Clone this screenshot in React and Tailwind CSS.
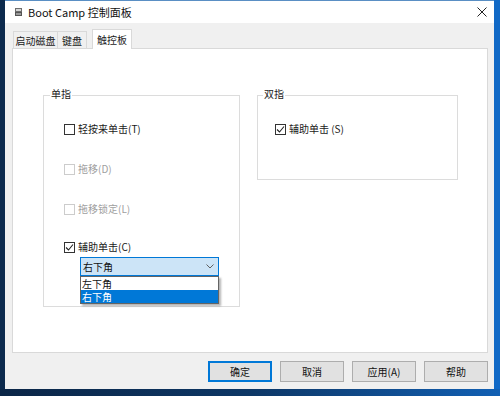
export default function App() {
  const font = "font-['Noto_Sans_CJK_SC','Noto_Sans',sans-serif]";

  const CheckBox = ({ checked, disabled }) => (
    <span
      className={`flex items-center justify-center w-[11px] h-[11px] border bg-white ${
        disabled ? "border-[#cccccc]" : "border-[#333333]"
      }`}
    >
      {checked && (
        <svg width="9" height="9" viewBox="0 0 9 9">
          <polyline points="1,4.5 3.5,7 8,1.5" fill="none" stroke="#222" strokeWidth="1.1" />
        </svg>
      )}
    </span>
  );

  const Option = ({ label, checked, disabled, className = "" }) => (
    <div className={`flex items-center gap-[3px] h-[12px] ${className}`}>
      <CheckBox checked={checked} disabled={disabled} />
      <span className={`leading-none ${disabled ? "text-[#a0a0a0]" : "text-[#1a1a1a]"}`}>{label}</span>
    </div>
  );

  return (
    <div className={`w-[500px] h-[396px] flex flex-col text-[10px] ${font}`}>
      <div className="flex h-[389px]">
        <div className="w-[5px] bg-[#0c2a4d]" />
        <div className="w-[489px] flex flex-col bg-[#f0f0f0] border-t border-[#5a8fc4]">
          {/* title bar */}
          <div className="h-[22px] bg-white flex items-center pl-[10px] pr-[6px]">
            <svg width="7" height="8" viewBox="0 0 7 8" className="mr-[6px]">
              <rect x="0.5" y="0.5" width="6" height="3" fill="#d6d6d6" stroke="#6d6d6d" />
              <rect x="0.5" y="4.5" width="6" height="3" fill="#9a9a9a" stroke="#555" />
            </svg>
            <span className="text-[11px] leading-none text-[#111]">Boot Camp 控制面板</span>
            <div className="flex-1" />
            <svg width="10" height="10" viewBox="0 0 10 10" className="mr-[1px]">
              <path d="M0.5 0.5 L9.5 9.5 M9.5 0.5 L0.5 9.5" stroke="#222" strokeWidth="1" />
            </svg>
          </div>

          <div className="flex-1 flex flex-col pl-[7px] pr-[6px]">
            {/* tabs */}
            <div className="flex items-end pt-[6px] pl-[1px] h-[25px]">
              <div className="w-[45px] h-[17px] border border-b-0 border-[#d9d9d9] flex items-center justify-center text-[#1a1a1a]">
                启动磁盘
              </div>
              <div className="w-[29px] h-[17px] border border-l-0 border-b-0 border-[#d9d9d9] flex items-center justify-center text-[#1a1a1a]">
                键盘
              </div>
              <div className="ml-[5px] w-[40px] h-[20px] -mb-px relative z-10 bg-white border border-b-0 border-[#d9d9d9] flex items-center justify-center text-[#1a1a1a]">
                触控板
              </div>
            </div>

            {/* panel */}
            <div className="h-[305px] bg-white border border-[#d9d9d9] flex items-start pl-[30px] pt-[46px] gap-[17px]">
              {/* 单指 */}
              <div className="relative w-[197px] h-[212px] border border-[#dcdcdc] pl-[20px] pt-[27px]">
                <span className="absolute -top-[7px] left-[6px] bg-white px-[1px] leading-none text-[#1a1a1a]">单指</span>
                <Option label="轻按来单击(T)" />
                <Option label="拖移(D)" disabled className="mt-[28px]" />
                <Option label="拖移锁定(L)" disabled className="mt-[28px]" />
                <Option label="辅助单击(C)" checked className="mt-[26px]" />
                <div className="relative ml-[16px] mt-[4px] w-[139px]">
                  <div className="h-[19px] bg-[#cce4f7] border border-[#0078d7] flex items-center pl-[2px] pr-[4px]">
                    <span className="leading-none text-[#111]">右下角</span>
                    <div className="flex-1" />
                    <svg width="8" height="5" viewBox="0 0 8 5">
                      <polyline points="0.5,0.5 4,4 7.5,0.5" fill="none" stroke="#606060" strokeWidth="1" />
                    </svg>
                  </div>
                  <div className="absolute top-full left-0 w-[139px] border border-[#646464] bg-white shadow-[2px_2px_2px_rgba(0,0,0,0.3)]">
                    <div className="h-[13px] flex items-center pl-[1px] leading-none text-[#111]">左下角</div>
                    <div className="h-[13px] flex items-center pl-[1px] leading-none bg-[#0078d7] text-white">右下角</div>
                  </div>
                </div>
              </div>

              {/* 双指 */}
              <div className="relative w-[201px] h-[85px] border border-[#dcdcdc] pl-[17px] pt-[27px]">
                <span className="absolute -top-[7px] left-[5px] bg-white px-[1px] leading-none text-[#1a1a1a]">双指</span>
                <Option label="辅助单击 (S)" checked />
              </div>
            </div>

            {/* buttons */}
            <div className="flex justify-end gap-[8px] pt-[8px]">
              <button className="w-[64px] h-[21px] bg-[#e1e1e1] border-2 border-[#0078d7] text-[#111] leading-none">确定</button>
              <button className="w-[64px] h-[21px] bg-[#e1e1e1] border border-[#adadad] text-[#111] leading-none">取消</button>
              <button className="w-[64px] h-[21px] bg-[#e1e1e1] border border-[#adadad] text-[#111] leading-none">应用(A)</button>
              <button className="w-[64px] h-[21px] bg-[#e1e1e1] border border-[#adadad] text-[#111] leading-none">帮助</button>
            </div>
          </div>
        </div>
        <div className="w-[6px] bg-[#1169c6]" />
      </div>
      <div className="h-[7px] bg-gradient-to-r from-[#0b2647] via-[#0d3766] to-[#1160b4]" />
    </div>
  );
}
